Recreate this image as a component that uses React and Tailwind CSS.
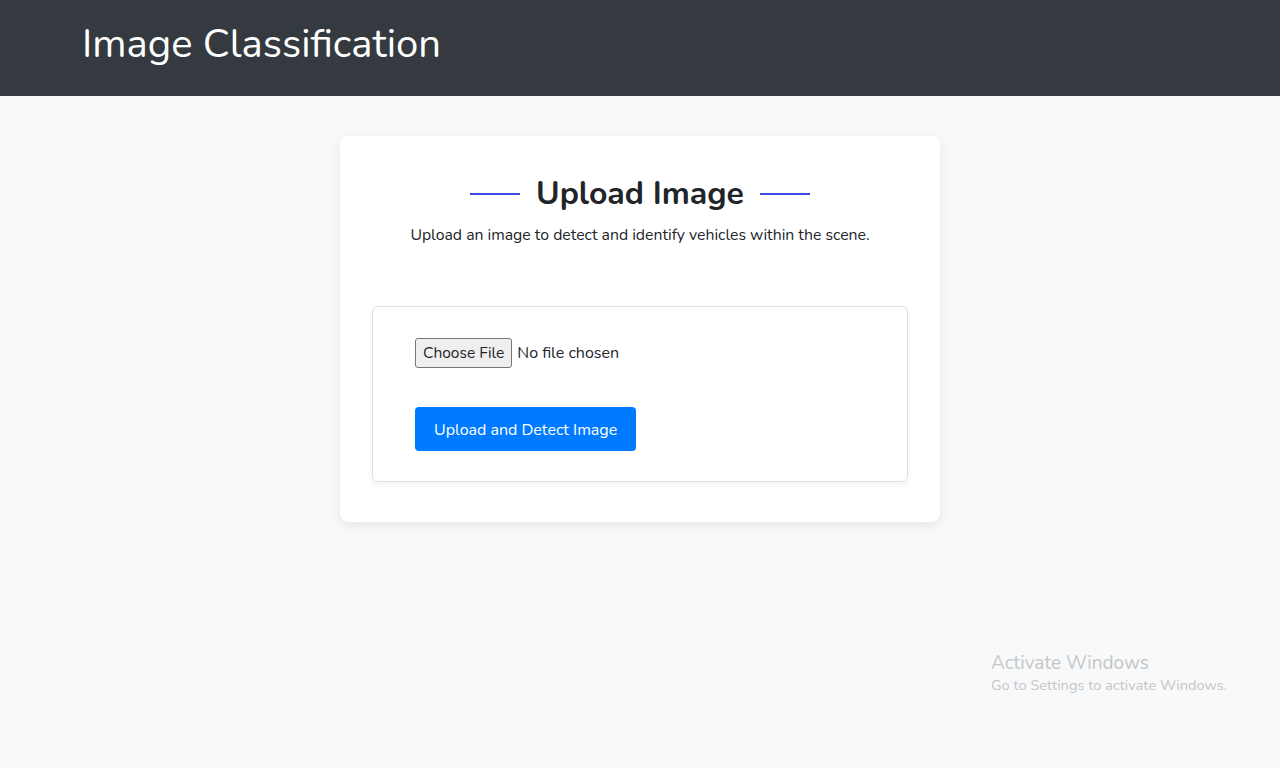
export default function App() {
  return (
    <div
      className="min-h-screen bg-[#f8f9fa] text-[#212529] relative"
      style={{ fontFamily: "Nunito, Lato, 'Noto Sans', sans-serif" }}
    >
      {/* Header */}
      <header className="h-24 bg-[#343a40] flex items-center px-[82px]">
        <h1 className="text-[40px] text-white font-normal leading-none pb-[8px]">Image Classification</h1>
      </header>

      {/* Main card */}
      <main className="flex justify-center pt-10">
        <div className="w-[600px] bg-white rounded-lg shadow-[0_4px_12px_rgba(0,0,0,0.08)] px-8 pt-8 pb-10">
          <div className="flex items-center justify-center gap-4 pt-[6px]">
            <span className="w-[50px] h-[2px] bg-[#3b4ee3]"></span>
            <h2 className="text-[32px] font-bold leading-[40px] text-[#212529]">Upload Image</h2>
            <span className="w-[50px] h-[2px] bg-[#3b4ee3]"></span>
          </div>
          <p className="text-center text-[15.8px] leading-6 mt-[9px]">
            Upload an image to detect and identify vehicles within the scene.
          </p>

          <div className="mt-[59px] border border-[#dee2e6] rounded-md shadow-[0_2px_6px_rgba(0,0,0,0.06)] px-[42px] pt-[30px] pb-[30px]">
            <div className="flex items-center gap-[5px] text-[16px] pt-[1px]">
              <button className="h-[30px] px-[7px] bg-[#efefef] border border-[#767676] rounded-[3px] text-[15.5px] text-[#212529]">
                Choose File
              </button>
              <span>No file chosen</span>
            </div>
            <button className="mt-[39px] h-[44px] px-[19px] pt-[1px] bg-[#007bff] text-white rounded text-[16px]">
              Upload and Detect Image
            </button>
          </div>
        </div>
      </main>

      {/* Windows watermark */}
      <div className="absolute left-[991px] top-[651px] text-[#c4c6c8]">
        <div className="text-[19px] leading-[24px]">Activate Windows</div>
        <div className="text-[14.6px] leading-[20px]">Go to Settings to activate Windows.</div>
      </div>
    </div>
  );
}
